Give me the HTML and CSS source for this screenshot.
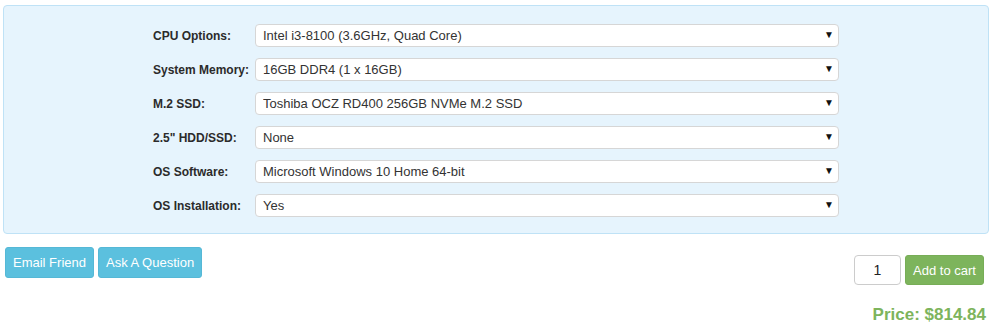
FILE: index.html
```html
<!DOCTYPE html>
<html lang="en">
<head>
    <meta charset="UTF-8">
    <meta name="viewport" content="width=device-width, initial-scale=1.0">
    <title>Configure System</title>
    <link rel="stylesheet" href="styles.css">
</head>
<body>
    <div class="page">
        <div class="options-panel">
            <div class="options">
                <div class="option-row">
                    <label for="cpu">CPU Options:</label>
                    <div class="select-wrap">
                        <select id="cpu"><option>Intel i3-8100 (3.6GHz, Quad Core)</option></select>
                        <span class="arrow">&#9660;</span>
                    </div>
                </div>
                <div class="option-row">
                    <label for="memory">System Memory:</label>
                    <div class="select-wrap">
                        <select id="memory"><option>16GB DDR4 (1 x 16GB)</option></select>
                        <span class="arrow">&#9660;</span>
                    </div>
                </div>
                <div class="option-row">
                    <label for="m2">M.2 SSD:</label>
                    <div class="select-wrap">
                        <select id="m2"><option>Toshiba OCZ RD400 256GB NVMe M.2 SSD</option></select>
                        <span class="arrow">&#9660;</span>
                    </div>
                </div>
                <div class="option-row">
                    <label for="hdd">2.5" HDD/SSD:</label>
                    <div class="select-wrap">
                        <select id="hdd"><option>None</option></select>
                        <span class="arrow">&#9660;</span>
                    </div>
                </div>
                <div class="option-row">
                    <label for="os">OS Software:</label>
                    <div class="select-wrap">
                        <select id="os"><option>Microsoft Windows 10 Home 64-bit</option></select>
                        <span class="arrow">&#9660;</span>
                    </div>
                </div>
                <div class="option-row">
                    <label for="install">OS Installation:</label>
                    <div class="select-wrap">
                        <select id="install"><option>Yes</option></select>
                        <span class="arrow">&#9660;</span>
                    </div>
                </div>
            </div>
        </div>

        <div class="actions">
            <div class="share">
                <button class="btn btn-info">Email Friend</button>
                <button class="btn btn-info">Ask A Question</button>
            </div>
            <div class="buy">
                <div class="cart-row">
                    <input type="text" class="qty" value="1">
                    <button class="btn btn-cart">Add to cart</button>
                </div>
                <div class="price">Price: $814.84</div>
            </div>
        </div>
    </div>
</body>
</html>
```

FILE: styles.css
```css
body {
    margin: 0;
    font-family: "Liberation Sans", Arial, sans-serif;
    font-size: 13px;
    color: #333;
    background: #fff;
}

.page {
    padding: 5px 11px 0 3px;
}

.options-panel {
    background-color: #e6f4fd;
    border: 1px solid #bfe2f6;
    border-radius: 4px;
    padding: 18px 0 16px;
}

.options {
    width: 686px;
    margin: 0 auto;
}

.option-row {
    display: flex;
    align-items: center;
    margin-bottom: 11px;
}

.option-row:last-child {
    margin-bottom: 0;
}

.option-row label {
    width: 102px;
    font-weight: bold;
    font-size: 12px;
    color: #2b2b2b;
}

.select-wrap {
    position: relative;
    flex: 1;
}

.select-wrap select {
    appearance: none;
    -webkit-appearance: none;
    display: block;
    width: 100%;
    height: 23px;
    padding: 0 7px;
    background: #fff;
    border: 1px solid #d6d6d6;
    border-radius: 4px;
    font-family: inherit;
    font-size: 13px;
    color: #333;
}

.arrow {
    position: absolute;
    right: 5px;
    top: 5px;
    font-size: 10px;
    line-height: 12px;
    color: #111;
    pointer-events: none;
}

.actions {
    display: flex;
    justify-content: space-between;
    margin-left: 2px;
}

.share {
    display: flex;
    gap: 4px;
    margin-top: 13px;
}

.btn {
    border: 1px solid transparent;
    border-radius: 3px;
    font-family: inherit;
    font-size: 13px;
    color: #fff;
    height: 31px;
    padding: 0 7px;
    cursor: pointer;
}

.btn-info {
    background-color: #5bc0de;
    border-color: #55b8d6;
}

.buy {
    display: flex;
    flex-direction: column;
    align-items: flex-end;
    margin-top: 21px;
}

.cart-row {
    display: flex;
    align-items: center;
    gap: 4px;
    margin-right: 5px;
}

.qty {
    width: 47px;
    height: 30px;
    box-sizing: border-box;
    border: 1px solid #ccc;
    border-radius: 4px;
    text-align: center;
    font-family: inherit;
    font-size: 14px;
    color: #222;
}

.btn-cart {
    background-color: #7db45c;
    border-color: #77ad56;
    width: 79px;
    height: 30px;
    padding: 0;
}

.price {
    margin-top: 20px;
    margin-right: 3px;
    font-size: 17px;
    font-weight: bold;
    color: #7db45c;
}
```
